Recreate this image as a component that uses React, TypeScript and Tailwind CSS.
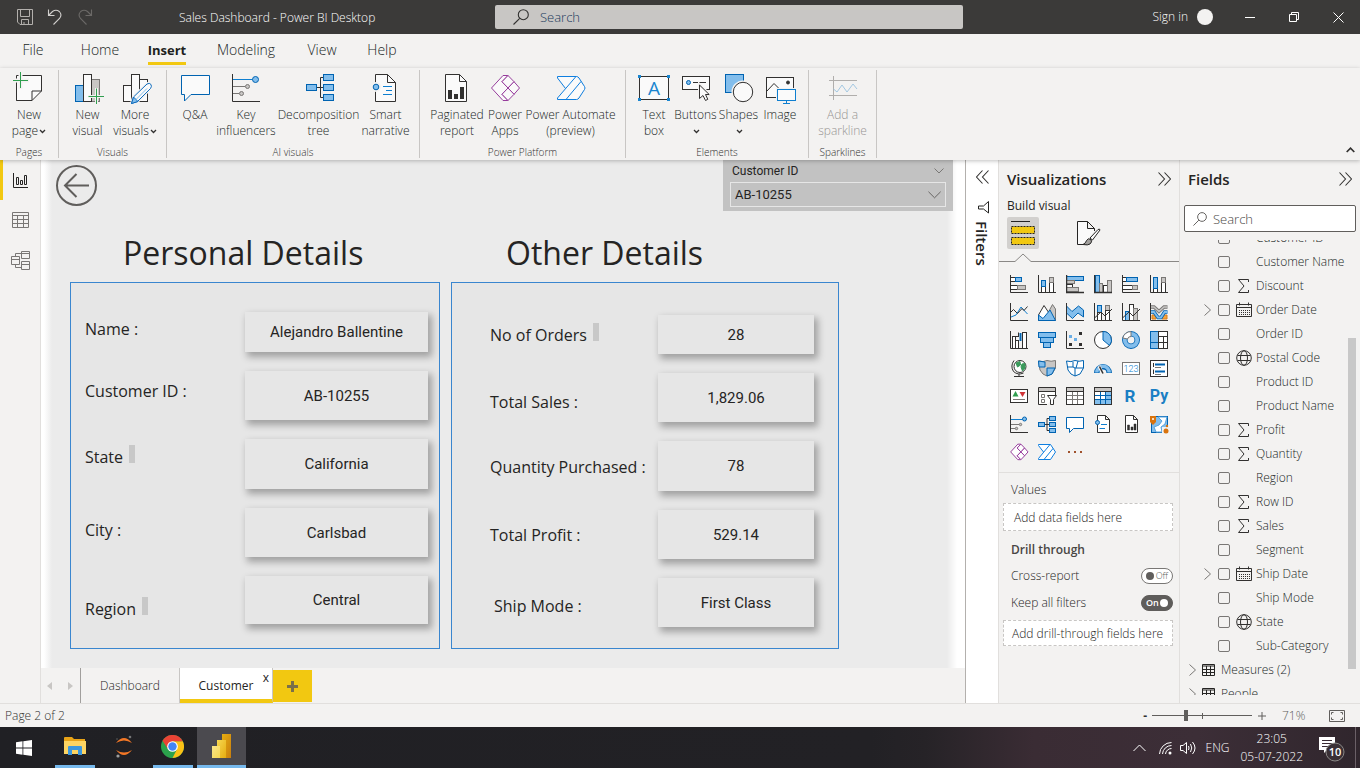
import type { ReactNode } from "react";

const INK = "#323130";
const BLUE = "#0063b1";
const SKY = "#83beec";
const GREY = "#c8c6c4";
const MID = "#797775";
const PAPER = "#fafafa";

/* ---------- ribbon ---------- */

function Big({ children }: { children: ReactNode }) {
  return (
    <svg width="34" height="34" viewBox="0 0 34 34" fill="none" stroke={INK} className="mb-px shrink-0" aria-hidden="true">
      {children}
    </svg>
  );
}

const diamonds = (
  <>
    <path d="M15 3.5L3.5 16L15 28.5H20L14 22.3L20 16L14 9.7L20 3.5Z" />
    <path d="M20 3.5L26 9.7L20 16L14 9.7Z" />
    <path d="M26 9.7L31.5 16L26 22.3L20 16Z" />
    <path d="M20 16L26 22.3L20 28.5L14 22.3Z" />
  </>
);

const icons: Record<string, ReactNode> = {
  newPage: (
    <Big>
      <path d="M4.5 3.5H29.5V19L20 28.5H4.5Z" fill={PAPER} />
      <path d="M20 28.5V19H29.5" />
      <path d="M0 8.5H17M8.5 0V17" stroke="#f3f2f1" strokeWidth="4" />
      <path d="M4.5 12V28.5" />
      <path d="M1 8.5H16M8.5 0V16" stroke="#2f9e4f" />
    </Big>
  ),
  newVisual: (
    <Big>
      <rect x="4.5" y="13.5" width="8" height="16" fill={SKY} stroke={BLUE} />
      <rect x="20.5" y="7.5" width="8" height="22" fill={GREY} stroke={MID} />
      <rect x="12.5" y="2.5" width="8" height="27" fill={PAPER} />
      <path d="M17 24.5H33M25.5 16V32" stroke="#f3f2f1" strokeWidth="3" />
      <path d="M17.5 24.5H33M25.5 16.5V32" stroke="#2f9e4f" />
    </Big>
  ),
  moreVisuals: (
    <Big>
      <rect x="5.5" y="13.5" width="8" height="16" fill={PAPER} />
      <rect x="21.5" y="7.5" width="8" height="22" fill={PAPER} />
      <rect x="13.5" y="2.5" width="8" height="27" fill={PAPER} />
      <path d="M13.5 31.5L15.5 25L29 12Q31.5 10.5 33 12.5Q34.5 14.5 32.5 16.5L19.5 29.5Z" fill={PAPER} stroke="#f3f2f1" strokeWidth="3" />
      <path d="M13.5 31.5L15.5 25L29 12Q31.5 10.5 33 12.5Q34 14.5 32.5 16.5L19.5 29.5Z" fill={PAPER} stroke="#0f6cbd" />
      <path d="M13.5 31.5L15.5 25L20 29.5Z" fill={SKY} stroke="#0f6cbd" />
      <path d="M18 27.5L29 16.5" stroke={SKY} />
    </Big>
  ),
  qa: (
    <Big>
      <path d="M3.5 3.5H31.5V22.5H13L6.5 29V22.5H3.5Z" fill={PAPER} stroke={BLUE} />
    </Big>
  ),
  key: (
    <Big>
      <path d="M3.5 2V29.5H31" />
      <path d="M4 7.5H23.5" stroke="#0f7fd0" />
      <circle cx="26.5" cy="7.5" r="3" fill={SKY} stroke={BLUE} />
      <path d="M4 14.5H16M4 21.5H10" stroke={MID} />
      <circle cx="18.5" cy="14.5" r="2" fill={GREY} stroke={MID} />
      <circle cx="12.5" cy="21.5" r="2" fill={GREY} stroke={MID} />
    </Big>
  ),
  tree: (
    <Big>
      <path d="M14.5 15.5H21.5M21.5 5.5H18.5V25.5H21.5" />
      <g fill={SKY} stroke={BLUE}>
        <rect x="4.5" y="12.5" width="10" height="6" />
        <rect x="21.5" y="2.5" width="10" height="6" />
        <rect x="21.5" y="12.5" width="10" height="6" />
        <rect x="21.5" y="22.5" width="10" height="6" />
      </g>
    </Big>
  ),
  smart: (
    <Big>
      <path d="M6.5 2.5H18.5L26.5 10.5V29.5H6.5Z" fill={PAPER} />
      <path d="M18.5 2.5V10.5H26.5" />
      <circle cx="7" cy="15" r="5" fill="#f3f2f1" stroke="none" />
      <circle cx="7" cy="15" r="2.8" fill={SKY} stroke={BLUE} />
      <path d="M14 14.5H23M17 18.5H23M14 22.5H23" stroke="#0f7fd0" />
    </Big>
  ),
  paginated: (
    <Big>
      <path d="M5.5 2.5H19.5L26.5 9.5V29.5H5.5Z" fill={PAPER} />
      <path d="M19.5 2.5V9.5H26.5" />
      <path d="M8 18h4v9h-4zM14 22h4v5h-4zM20 15h4v12h-4z" fill={INK} stroke="none" />
    </Big>
  ),
  apps: (
    <Big>
      <g stroke="#963c9c" fill={PAPER} strokeLinejoin="round">{diamonds}</g>
    </Big>
  ),
  automate: (
    <Big>
      <path d="M3.5 4.5H22L31 16L22 27.5H3.5L12 16Z" fill={PAPER} stroke="none" />
      <path d="M11.5 16.5L3.5 6V4.5H22.5Q24 4.5 25 6L30.5 14.5Q31.5 16 30.5 17.5L25 26Q24 27.5 22.5 27.5H3.5V26L22 4.5M12 27.5L27 9.5" stroke="#0f7fe0" />
    </Big>
  ),
  textBox: (
    <Big>
      <rect x="2.5" y="4.5" width="29" height="23" fill={PAPER} />
      <path d="M1 3h3v3h-3zM30 3h3v3h-3zM1 26h3v3h-3zM30 26h3v3h-3z" fill="#1a86d0" stroke="none" />
      <text x="17" y="23" fontSize="19" fontWeight="400" textAnchor="middle" fill="#1a86d0" stroke="none" className="font-['Open_Sans',sans-serif]">A</text>
    </Big>
  ),
  buttons: (
    <Big>
      <rect x="3.5" y="4.5" width="27" height="13" fill={PAPER} />
      <circle cx="9.5" cy="10.5" r="2" fill={SKY} stroke={BLUE} />
      <path d="M14 10.5H27" />
      <path d="M20.5 12.5V27L24 24L26.5 28.5L29 27L26.5 22.5H30.5Z" fill={PAPER} stroke="#f3f2f1" strokeWidth="3" />
      <path d="M20.5 13V26.5L24 23.5L26.5 28.5L28.8 27.3L26.5 22.5H30.2Z" fill={PAPER} />
    </Big>
  ),
  shapes: (
    <Big>
      <rect x="3.5" y="2.5" width="18" height="18" fill={SKY} stroke={BLUE} />
      <circle cx="21" cy="20" r="11.5" fill="#f3f2f1" stroke="none" />
      <circle cx="21" cy="20" r="9.7" fill={PAPER} />
    </Big>
  ),
  image: (
    <Big>
      <rect x="3.5" y="5.5" width="27" height="20" fill={PAPER} />
      <path d="M4 19L11 11.5L16 16.5" />
      <circle cx="25" cy="10.5" r="1.5" fill={INK} />
      <rect x="13" y="16" width="21" height="17" fill="#f3f2f1" stroke="none" />
      <rect x="14.5" y="17.5" width="18" height="11" fill={PAPER} stroke="#0f7fd0" />
      <path d="M23.5 28.5V31.5M20 31.5H27" stroke="#0f7fd0" />
    </Big>
  ),
  spark: (
    <Big>
      <path d="M7.5 4V28M3 8.5H31M3 23.5H31" stroke="#b0aeac" />
      <path d="M7.5 17L11 20L16 13L21 20L27 12L31 17" stroke="#a3c8e2" />
    </Big>
  ),
};

function Caret() {
  return (
    <svg width="7" height="5" viewBox="0 0 7 5" fill="none" stroke={INK} strokeWidth="1.3" aria-hidden="true" className="ml-px inline-block">
      <path d="M1 1L3.5 3.5L6 1" />
    </svg>
  );
}

type Cmd = { icon: string; a: string; b?: string; caret?: boolean; w: string; off?: boolean };
const ribbon: { name: string; cls: string; items: Cmd[] }[] = [
  { name: "Pages", cls: "", items: [{ icon: "newPage", a: "New", b: "page", caret: true, w: "w-[58px]" }] },
  {
    name: "Visuals",
    cls: "px-[6px]",
    items: [
      { icon: "newVisual", a: "New", b: "visual", w: "w-[45px]" },
      { icon: "moreVisuals", a: "More", b: "visuals", caret: true, w: "w-[50px]" },
    ],
  },
  {
    name: "AI visuals",
    cls: "px-2",
    items: [
      { icon: "qa", a: "Q&A", w: "w-[40px]" },
      { icon: "key", a: "Key", b: "influencers", w: "w-[62px]" },
      { icon: "tree", a: "Decomposition", b: "tree", w: "w-[83px]" },
      { icon: "smart", a: "Smart", b: "narrative", w: "w-[51px]" },
    ],
  },
  {
    name: "Power Platform",
    cls: "px-2",
    items: [
      { icon: "paginated", a: "Paginated", b: "report", w: "w-[58px]" },
      { icon: "apps", a: "Power", b: "Apps", w: "w-[38px]" },
      { icon: "automate", a: "Power Automate", b: "(preview)", w: "w-[93px]" },
    ],
  },
  {
    name: "Elements",
    cls: "px-2",
    items: [
      { icon: "textBox", a: "Text", b: "box", w: "w-[40px]" },
      { icon: "buttons", a: "Buttons", caret: true, w: "w-[43px]" },
      { icon: "shapes", a: "Shapes", caret: true, w: "w-[43px]" },
      { icon: "image", a: "Image", w: "w-[40px]" },
    ],
  },
  { name: "Sparklines", cls: "", items: [{ icon: "spark", a: "Add a", b: "sparkline", w: "w-[67px]", off: true }] },
];

function Ribbon() {
  return (
    <div className="relative z-10 flex items-stretch bg-[#f3f2f1] pb-[2px] pt-[2px] shadow-[0_1px_4px_rgba(0,0,0,0.25)]">
      {ribbon.map((g) => (
        <section key={g.name} aria-label={g.name} className="flex h-[88px] flex-col items-center border-r border-[#c8c6c4]">
          <div className={"flex h-[78px] items-start pt-[2px] " + g.cls}>
            {g.items.map((c) => (
              <button
                key={c.icon}
                type="button"
                disabled={c.off}
                className={"flex flex-col items-center whitespace-nowrap text-[12px] font-[330] leading-4 " + c.w + (c.off ? " text-[#979593]" : " text-[#201f1e]")}
              >
                {icons[c.icon]}
                <span>{c.a}</span>
                <span>
                  {c.b}
                  {c.caret && <Caret />}
                </span>
              </button>
            ))}
          </div>
          <span className="text-[10px] leading-3 text-[#323130]">{g.name}</span>
        </section>
      ))}
      <button type="button" aria-label="Collapse ribbon" className="ml-auto self-end p-[5px]">
        <svg width="9" height="6" viewBox="0 0 9 6" fill="none" stroke={INK} strokeWidth="1.7">
          <path d="M.7 5L4.5 1.2L8.3 5" />
        </svg>
      </button>
    </div>
  );
}

/* ---------- title bar ---------- */

function Magnifier({ size, color }: { size: number; color: string }) {
  return (
    <svg width={size} height={size} viewBox="0 0 16 16" fill="none" stroke={color} strokeWidth="1.1" aria-hidden="true" className="shrink-0">
      <circle cx="10.3" cy="5.7" r="5" />
      <path d="M6.7 9.3L.5 15.5" />
    </svg>
  );
}

function TitleBar() {
  return (
    <header className="grid h-[34px] shrink-0 grid-cols-[495fr_468fr_397fr] items-center bg-[#3b3a39] text-[12px] text-white">
      <div className="flex items-center pl-[17px]">
        <div className="flex w-[162px] items-center gap-[14px]">
          <button type="button" aria-label="Save">
            <svg width="16" height="16" viewBox="0 0 16 16" fill="none" stroke="#b3b0ad">
              <path d="M.5 .5H15.5V15.5H3L.5 13ZM3.5 .5V7.5H12.5V.5M4.5 15.5V10.5H11.5V15.5M7 13V15.5" />
            </svg>
          </button>
          <button type="button" aria-label="Undo">
            <svg width="16" height="16" viewBox="0 0 16 16" fill="none" stroke="#d2d0ce" strokeWidth="1.1">
              <path d="M1.5 .5V6.5H7.5M1.5 6.5L5.5 2.5Q9 0 12.3 2.5Q15.5 6 12.5 9.5L6.5 15.5" />
            </svg>
          </button>
          <button type="button" aria-label="Redo">
            <svg width="16" height="16" viewBox="0 0 16 16" fill="none" stroke="#6b6967" strokeWidth="1.1">
              <path d="M14.5 .5V6.5H8.5M14.5 6.5L10.5 2.5Q7 0 3.7 2.5Q.5 6 3.5 9.5L9.5 15.5" />
            </svg>
          </button>
        </div>
        <h1 className="whitespace-nowrap pt-[2px] font-[350]">Sales Dashboard - Power BI Desktop</h1>
      </div>
      <label className="flex h-6 items-center gap-[11px] rounded-[2px] bg-[#c8c6c4] pl-[18px]">
        <Magnifier size={16} color="#323130" />
        <span className="sr-only">Search Power BI</span>
        <input type="text" placeholder="Search" className="h-6 w-full bg-transparent text-[13px] leading-6 text-[#1b3a5c] outline-none placeholder:text-[#1b3a5c]" />
      </label>
      <div className="flex items-center justify-end">
        <button type="button" className="mr-[15px] flex items-center gap-[9px]">
          Sign in
          <span className="size-4 rounded-full bg-[#f3f2f1]" />
        </button>
        <button type="button" aria-label="Minimize" className="flex h-8 w-11 items-center justify-center">
          <svg width="10" height="10" viewBox="0 0 10 10" stroke="#fff"><path d="M0 5.5H10" /></svg>
        </button>
        <button type="button" aria-label="Restore" className="flex h-8 w-11 items-center justify-center">
          <svg width="10" height="10" viewBox="0 0 10 10" fill="none" stroke="#fff"><path d="M.5 2.5H7.5V9.5H.5ZM2.5 2V.5H9.5V7.5H8" /></svg>
        </button>
        <button type="button" aria-label="Close" className="flex h-8 w-11 items-center justify-center">
          <svg width="11" height="11" viewBox="0 0 11 11" stroke="#fff"><path d="M.5 .5L10.5 10.5M10.5 .5L.5 10.5" /></svg>
        </button>
      </div>
    </header>
  );
}

const menus = [
  { t: "File", w: "w-[66px]" },
  { t: "Home", w: "w-[68px]" },
  { t: "Insert", w: "w-[66px]" },
  { t: "Modeling", w: "w-[92px]" },
  { t: "View", w: "w-[60px]" },
  { t: "Help", w: "w-[60px]" },
];

function Menu() {
  return (
    <nav className="flex h-[34px] shrink-0 bg-[#f3f2f1] text-[14px] font-[330] text-[#201f1e]">
      {menus.map((m) => (
        <button key={m.t} type="button" className={"flex justify-center " + m.w}>
          {m.t === "Insert" ? (
            <span className="h-[31px] border-b-3 border-[#f2c811] pt-[6px] text-[13px] font-bold leading-5">{m.t}</span>
          ) : (
            <span className="pt-[6px] leading-5">{m.t}</span>
          )}
        </button>
      ))}
    </nav>
  );
}

/* ---------- left rail ---------- */

function Rail() {
  return (
    <nav aria-label="Views" className="flex w-[41px] shrink-0 flex-col border-r border-[#e1dfdd] bg-[#f3f2f1]">
      <button type="button" aria-label="Report view" className="flex h-10 items-center justify-center border-l-3 border-[#f2c811] pr-[2px]">
        <svg width="15" height="15" viewBox="0 0 15 15" fill="none" stroke="#252423">
          <path d="M.5 0V14.5H15M3.5 4.5H5.5V11.5H3.5ZM7.5 7.5H9.5V11.5H7.5ZM11.5 2.5H13.5V11.5H11.5Z" />
        </svg>
      </button>
      <button type="button" aria-label="Data view" className="flex h-10 items-center justify-center">
        <svg width="17" height="16" viewBox="0 0 17 16" fill="none" stroke="#797775">
          <path d="M.5 .5H16.5V15.5H.5ZM.5 3.5H16.5M.5 7.5H16.5M.5 11.5H16.5M5.5 3.5V15.5M11.5 3.5V15.5" />
        </svg>
      </button>
      <button type="button" aria-label="Model view" className="flex h-10 items-center justify-center">
        <svg width="19" height="19" viewBox="0 0 19 19" fill="none" stroke="#797775">
          <path d="M.5 5.5H8.5V13.5H.5ZM.5 8.5H8.5M10.5 .5H18.5V7.5H10.5ZM10.5 2.5H18.5M10.5 10.5H18.5V18.5H10.5ZM10.5 13.5H18.5M4.5 5.5V2.5H10.5M4.5 13.5V16.5H10.5" />
        </svg>
      </button>
    </nav>
  );
}

/* ---------- report page ---------- */

type LabelRow = { t: string; h: string; mark?: boolean; pad?: string };
type CardRow = { v: string; h: string };

function Panel({ title, titlePad, labels, cards, labelTop, cardTop, left, cardCol }: {
  title: string;
  titlePad: string;
  labels: LabelRow[];
  cards: CardRow[];
  labelTop: string;
  cardTop: string;
  left: string;
  cardCol: string;
}) {
  return (
    <section>
      <h2 className={"whitespace-nowrap pb-[3px] pt-[15px] text-[32px] font-[370] leading-[53px] text-[#252423] " + titlePad}>{title}</h2>
      <div className={"flex h-[367px] justify-between border border-[#3a86cf] bg-[#e6e6e6] " + left}>
        <div className={labelTop}>
          {labels.map((l) => (
            <div key={l.t} className={"flex items-start gap-[6px] whitespace-nowrap text-[16px] font-[380] leading-6 text-[#252423] " + l.h + " " + (l.pad ?? "")}>
              {l.t}
              {l.mark && <span className="h-[18px] w-[6px] bg-[#c8c8c8]" />}
            </div>
          ))}
        </div>
        <div className={"flex flex-col " + cardTop + " " + cardCol}>
          {cards.map((c) => (
            <div key={c.v} className={"flex items-center justify-center bg-[#e6e6e6] pt-px font-['Roboto',sans-serif] text-[15px] font-[450] text-[#252423] shadow-[3px_4px_7px_1px_rgba(0,0,0,0.3)] " + c.h}>
              {c.v}
            </div>
          ))}
        </div>
      </div>
    </section>
  );
}

function Report() {
  return (
    <main className="min-h-0 flex-1 overflow-hidden bg-[linear-gradient(to_right,#fff_3px,#ebebeb_11px,#ebebeb_calc(100%-18px),#fff_calc(100%-8px))]">
      <div className="flex items-start justify-between pl-[15px] pr-[12px]">
        <button type="button" aria-label="Back" className="pt-[5px]">
          <svg width="41" height="41" viewBox="0 0 41 41" fill="none" stroke="#605e5c" strokeWidth="2">
            <circle cx="20.5" cy="20.5" r="19.5" />
            <path d="M33 20.5H9M20.5 9L9 20.5L20.5 32" />
          </svg>
        </button>
        <div className="w-[230px] bg-[#c2c2c2] px-[7px] pb-[4px] pt-[3px] font-['Roboto',sans-serif] text-[#252423]">
          <div className="flex items-center justify-between pl-[2px] pr-[2px]">
            <label htmlFor="customer" className="text-[12px] font-[450] leading-4">Customer ID</label>
            <svg width="10" height="6" viewBox="0 0 10 6" fill="none" stroke="#797775"><path d="M.5 .5L5 5L9.5 .5" /></svg>
          </div>
          <div className="mt-[3px] flex h-[25px] items-center border border-[#e6e6e6] pr-[4px]">
            <select id="customer" className="w-full appearance-none bg-transparent pl-[4px] pt-px text-[13px] font-normal outline-none">
              <option>AB-10255</option>
            </select>
            <svg width="14" height="8" viewBox="0 0 14 8" fill="none" stroke="#605e5c"><path d="M.5 .5L7 7L13.5 .5" /></svg>
          </div>
        </div>
      </div>
      <div className="ml-[29px] mr-[126px] grid grid-cols-[370fr_388fr] gap-[11px]">
        <Panel
          title="Personal Details"
          titlePad="pl-[53px]"
          left="pl-[14px] pr-[11px]"
          labelTop="pt-[34px]"
          cardTop="pt-[29px]"
          cardCol="w-[183px] gap-[19px]"
          labels={[
            { t: "Name :", h: "h-[62px]" },
            { t: "Customer ID :", h: "h-[66px]" },
            { t: "State", h: "h-[73px]", mark: true },
            { t: "City :", h: "h-[79px]" },
            { t: "Region", h: "h-[24px]", mark: true },
          ]}
          cards={[
            { v: "Alejandro Ballentine", h: "h-[40px]" },
            { v: "AB-10255", h: "h-[49px]" },
            { v: "California", h: "h-[50px]" },
            { v: "Carlsbad", h: "h-[49px]" },
            { v: "Central", h: "h-[48px]" },
          ]}
        />
        <Panel
          title="Other Details"
          titlePad="pl-[55px]"
          left="pl-[38px] pr-[24px]"
          labelTop="pt-[40px]"
          cardTop="pt-[32px]"
          cardCol="w-[156px] gap-[19px]"
          labels={[
            { t: "No of Orders", h: "h-[67px]", mark: true },
            { t: "Total Sales :", h: "h-[65px]" },
            { t: "Quantity Purchased :", h: "h-[68px]" },
            { t: "Total Profit :", h: "h-[71px]" },
            { t: "Ship Mode :", h: "h-[24px]", pad: "pl-1" },
          ]}
          cards={[
            { v: "28", h: "h-[39px]" },
            { v: "1,829.06", h: "h-[49px]" },
            { v: "78", h: "h-[50px]" },
            { v: "529.14", h: "h-[49px]" },
            { v: "First Class", h: "h-[49px]" },
          ]}
        />
      </div>
    </main>
  );
}

function PageTabs() {
  return (
    <div className="flex h-[35px] shrink-0 items-start bg-[#f3f2f1] text-[12px] text-[#252423]">
      <div className="flex h-full w-10 items-center justify-between border-r border-[#a19f9d] pl-[6px] pr-[7px]">
        <button type="button" aria-label="Previous page"><svg width="5" height="8" viewBox="0 0 5 8" fill="#c8c6c4"><path d="M5 0V8L0 4Z" /></svg></button>
        <button type="button" aria-label="Next page"><svg width="5" height="8" viewBox="0 0 5 8" fill="#c8c6c4"><path d="M0 0V8L5 4Z" /></svg></button>
      </div>
      <button type="button" className="h-full w-[99px] border-r border-[#c8c6c4]">Dashboard</button>
      <div className="relative h-full w-[93px] border-b-4 border-r border-b-[#f2c811] border-r-[#c8c6c4] bg-white">
        <button type="button" className="h-full w-full pt-[4px] font-medium">Customer</button>
        <button type="button" aria-label="Delete page" className="absolute right-[3px] top-[2px] font-normal leading-4">x</button>
      </div>
      <button type="button" aria-label="New page" className="mt-[2px] flex h-8 w-[39px] items-center justify-center bg-[#f2c811]">
        <svg width="11" height="11" viewBox="0 0 11 11" stroke="#7a6f4a" strokeWidth="3"><path d="M5.5 0V11M0 5.5H11" /></svg>
      </button>
    </div>
  );
}

/* ---------- side panes ---------- */

function Chevrons({ flip }: { flip?: boolean }) {
  return (
    <svg width="13" height="14" viewBox="0 0 13 14" fill="none" stroke="#323130" strokeWidth="1.1" className={flip ? "rotate-180" : ""}>
      <path d="M.5 .5L6.5 7L.5 13.5M6.5 .5L12.5 7L6.5 13.5" />
    </svg>
  );
}

function Filters() {
  return (
    <aside className="flex w-[33px] shrink-0 flex-col items-center border-l border-[#b3b0ad] bg-white pt-[10px]">
      <button type="button" aria-label="Expand filters"><Chevrons flip /></button>
      <svg width="13" height="13" viewBox="0 0 13 13" fill="none" stroke="#252423" className="ml-[3px] mt-[17px]" aria-hidden="true">
        <path d="M11.5 .5V12L6.5 8H1.5V5H6.5Z" />
      </svg>
      <h2 className="mt-[7px] text-[15px] font-semibold leading-5 text-[#252423] [writing-mode:vertical-rl]">Filters</h2>
    </aside>
  );
}

const bS = { fill: SKY, stroke: BLUE };
const gS = { fill: GREY, stroke: MID };
const wS = { fill: "#fff", stroke: INK };
const axis = <path d="M.5 0V17.5H18" />;
const pageFold = <path d="M3.5 .5H11.5L15.5 4.5V17.5H3.5ZM11.5 .5V4.5H15.5" fill="#fff" />;

const gallery: [string, ReactNode][] = [
  ["Stacked bar chart", <>{axis}<rect x=".5" y="2.5" width="5" height="4" {...wS} /><rect x="5.5" y="2.5" width="6" height="4" {...bS} /><rect x=".5" y="10.5" width="7" height="4" {...wS} /><rect x="7.5" y="10.5" width="8" height="4" {...gS} /></>],
  ["Stacked column chart", <>{axis}<rect x="3.5" y="11.5" width="4" height="6" {...wS} /><rect x="3.5" y="5.5" width="4" height="6" {...bS} /><rect x="11.5" y="7.5" width="4" height="10" {...wS} /><rect x="11.5" y="2.5" width="4" height="5" {...gS} /></>],
  ["Clustered bar chart", <><rect x=".5" y="1.5" width="17" height="4" {...bS} /><rect x=".5" y="5.5" width="8" height="3" {...gS} /><rect x=".5" y="9.5" width="6" height="3" {...wS} /><rect x=".5" y="12.5" width="12" height="4" {...gS} /><path d="M.5 0V17.5H18" strokeWidth="1.5" /></>],
  ["Clustered column chart", <><rect x="1.5" y=".5" width="4" height="17" {...bS} /><rect x="5.5" y="8.5" width="3" height="9" {...gS} /><rect x="9.5" y="10.5" width="4" height="7" {...wS} /><rect x="13.5" y="5.5" width="4" height="12" {...gS} /><path d="M.5 0V17.5H18" strokeWidth="1.5" /></>],
  ["100% stacked bar chart", <>{axis}<rect x=".5" y="2.5" width="4" height="4" {...wS} /><rect x="4.5" y="2.5" width="11" height="4" {...bS} /><rect x=".5" y="10.5" width="10" height="4" {...wS} /><rect x="10.5" y="10.5" width="5" height="4" {...gS} /></>],
  ["100% stacked column chart", <>{axis}<rect x="3.5" y="13.5" width="4" height="4" {...wS} /><rect x="3.5" y="2.5" width="4" height="11" {...bS} /><rect x="11.5" y="7.5" width="4" height="10" {...wS} /><rect x="11.5" y="2.5" width="4" height="5" {...gS} /></>],
  ["Line chart", <>{axis}<path d="M1 14L6 12L11 4L17.5 11" stroke="#0f7fd0" /><path d="M1 9L3.5 6.5L7.5 10.5L12 5.5L14 7.5L17.5 3.5" /></>],
  ["Area chart", <><path d="M11 8L14.5 1.5L17.5 6V17.5H9Z" {...gS} /><path d="M.5 12L6 2.5L13 13L9 17.5H.5Z" {...wS} /><path d="M.5 12L5 15.5L12 7L17.5 17.5H.5Z" {...bS} /></>],
  ["Stacked area chart", <><path d="M.5 3L6 8.5L12.5 3L17.5 7V14L12 10L6.5 15.5L.5 10Z" {...bS} />{axis}</>],
  ["Line and stacked column chart", <><rect x="3.5" y="2.5" width="4" height="7" {...bS} /><rect x="3.5" y="9.5" width="4" height="8" {...wS} /><rect x="11.5" y="2.5" width="4" height="5" {...gS} /><rect x="11.5" y="7.5" width="4" height="10" {...wS} />{axis}<path d="M.5 15L7 9L11 13L18 6" /></>],
  ["Line and clustered column chart", <><rect x="3.5" y="8.5" width="4" height="9" {...bS} /><rect x="7.5" y="1.5" width="4" height="16" {...wS} /><rect x="11.5" y="5.5" width="4" height="12" {...gS} />{axis}<path d="M.5 15L7 9L11 13L18 6" /></>],
  ["Ribbon chart", <><path d="M2 12h4v4h-4zM12 12h5v4h-5z" fill="#f2a33c" stroke="#d97a1a" /><path d="M1 4H4L9 8.5L14 4H17.5" stroke={MID} strokeWidth="3.5" /><path d="M1 4H4L9 8.5L14 4H17.5" stroke={GREY} strokeWidth="1.5" /><path d="M1 9H4L8 14.5H11L14.5 9H17.5" stroke={BLUE} strokeWidth="3.5" /><path d="M1 9H4L8 14.5H11L14.5 9H17.5" stroke={SKY} strokeWidth="1.8" />{axis}</>],
  ["Waterfall chart", <>{axis}<rect x="2.5" y="5.5" width="3" height="12" {...wS} /><rect x="5.5" y="9.5" width="3" height="8" {...wS} /><path d="M10.5 2V10" stroke={BLUE} strokeWidth="2" /><path d="M5.5 5.5H9M8.5 1.5V5" /><rect x="12.5" y="1.5" width="4" height="16" {...wS} /></>],
  ["Funnel", <><rect x=".5" y="1.5" width="17" height="5" {...bS} /><rect x="2.5" y="6.5" width="13" height="5" {...bS} /><rect x="5.5" y="11.5" width="7" height="5" {...bS} /></>],
  ["Scatter chart", <>{axis}<path d="M3 12h3v3h-3zM13 1h3v3h-3zM13 12h3v3h-3z" fill={INK} stroke="none" /><path d="M3 4h3v3h-3zM8 7h3v3h-3z" fill="#6aaee6" stroke="none" /></>],
  ["Pie chart", <><circle cx="9" cy="9" r="8.5" {...wS} /><path d="M9 .5A8.5 8.5 0 0 1 15.5 14.5L9 9Z" {...bS} /></>],
  ["Donut chart", <><circle cx="9" cy="9" r="6.2" stroke={BLUE} strokeWidth="5.5" /><circle cx="9" cy="9" r="6.2" stroke={SKY} strokeWidth="3.8" /><path d="M.8 7A8.3 8.3 0 0 1 9 .6V5.5A3.5 3.5 0 0 0 5.5 8Z" fill="#fff" stroke={MID} /></>],
  ["Treemap", <><rect x=".5" y=".5" width="17" height="17" {...wS} /><rect x=".5" y=".5" width="8" height="17" {...bS} /><path d="M.5 11.5H8.5" stroke={BLUE} /><path d="M8.5 5.5H17.5M13.5 5.5V17.5M8.5 11.5H17.5M8.5 0V18" /></>],
  ["Map", <><circle cx="10" cy="7.5" r="6" fill="#fff" stroke={INK} /><path d="M6 4L10 2.5L10.5 6L7.5 8ZM12 5L15 4.5L15 9L12.5 12L11 8Z" fill="#3a9a5b" stroke="#3a9a5b" /><path d="M4 1.5Q0 7 3.5 12.5Q8 16.5 13.5 14M9 15V17.5M4 17.5H14" /></>],
  ["Filled map", <><path d="M.5 2Q5 3.5 9 1.5Q13 3 17.5 1.5V9L14 15L9 17L5 15L2 11Z" {...gS} /><path d="M.5 2L7 3V8H1ZM9 9H17L14 15L9 17Z" {...bS} /></>],
  ["Azure map", <><path d="M.5 2Q5 3.5 9 1.5Q13 3 17.5 1.5V9L14 15L9 17L5 15L2 11Z" fill="#fff" stroke={BLUE} /><path d="M7 3V8H1M9 17V9H17M7 8L9 9M12 2L10 9" stroke={BLUE} /></>],
  ["Gauge", <><path d="M2.8 14A6.2 6.2 0 0 1 15.2 14" stroke={BLUE} strokeWidth="5.5" /><path d="M2.8 13.5A6.2 6.2 0 0 1 15.2 13.5" stroke={SKY} strokeWidth="3.5" /><path d="M8 13.5L5 7" stroke="#f3f2f1" strokeWidth="3" /><path d="M9 14.5L5.5 7.5" strokeWidth="1.5" /></>],
  ["Card", <><rect x=".5" y="3.5" width="17" height="12" fill="#fff" stroke={MID} /><text x="9" y="13" fontSize="9" textAnchor="middle" fill="#0f7fd0" stroke="none" className="font-['Roboto',sans-serif]">123</text></>],
  ["Multi-row card", <><rect x=".5" y="1.5" width="17" height="16" {...wS} /><path d="M3.5 4V8M3.5 10.5V15" /><path d="M5 5.5H15M5 12.5H15" stroke={BLUE} strokeWidth="2" /><path d="M5 8.5H11M5 15.5H11" stroke={MID} /></>],
  ["KPI", <><rect x=".5" y="2.5" width="17" height="13" {...wS} /><path d="M2.5 9.5L5.5 4L8.5 9.5Z" fill="#2f9e4f" stroke="none" /><path d="M9.5 5H15.5L12.5 10Z" fill="#d13438" stroke="none" /><path d="M3 12.5H15" stroke={MID} /></>],
  ["Slicer", <><path d="M9 17.5H.5V.5H17.5V9" fill="#fff" /><path d="M1 1H17V4H1Z" fill={GREY} stroke="none" /><path d="M.5 4.5H17.5" /><path d="M3.5 7.5H6.5V10.5H3.5ZM3.5 12.5H6.5V15.5H3.5Z" stroke={MID} /><path d="M9.5 8.5H18.5L15.5 12.5V17.5H12.5V12.5Z" fill="#fff" /></>],
  ["Table", <><rect x=".5" y=".5" width="17" height="17" {...wS} /><path d="M1 1H17V4H1Z" fill={GREY} stroke="none" /><path d="M.5 4.5H17.5" /><path d="M1 8.5H17M1 12.5H17M6.5 5V17M11.5 5V17" stroke={MID} /></>],
  ["Matrix", <><rect x=".5" y=".5" width="17" height="17" {...wS} /><path d="M1 1H17V4H1Z" fill={GREY} stroke="none" /><path d="M12 5H17V17H1V13H12Z" fill={SKY} stroke="none" /><path d="M.5 4.5H17.5" /><path d="M1 8.5H17M1 12.5H17M6.5 5V17M11.5 5V17" stroke={BLUE} /></>],
  ["R script visual", <text x="8" y="15" fontSize="17" fontWeight="700" textAnchor="middle" fill="#1a7fc4" stroke="none" className="font-['Roboto',sans-serif]">R</text>],
  ["Python visual", <text x="9" y="14" fontSize="16" fontWeight="700" textAnchor="middle" fill="#1a7fc4" stroke="none" className="font-['Roboto',sans-serif]">Py</text>],
  ["Key influencers", <>{axis}<path d="M1 4.5H12" stroke="#0f7fd0" /><circle cx="14.5" cy="4" r="2" {...bS} /><path d="M1 9.5H9M1 13.5H5" stroke={MID} /><circle cx="10.5" cy="9.5" r="1.2" {...gS} /><circle cx="6.5" cy="13.5" r="1.2" {...gS} /></>],
  ["Decomposition tree", <><path d="M6.5 9.5H11.5M11.5 3.5H9V15.5H11.5" /><rect x=".5" y="7.5" width="6" height="4" {...bS} /><rect x="11.5" y="1.5" width="6" height="4" {...bS} /><rect x="11.5" y="7.5" width="6" height="4" {...bS} /><rect x="11.5" y="13.5" width="6" height="4" {...bS} /></>],
  ["Q&A", <path d="M.5 2.5H17.5V13.5H7.5L3.5 17.5V13.5H.5Z" fill="#fff" stroke={BLUE} />],
  ["Smart narrative", <>{pageFold}<circle cx="3.5" cy="7.5" r="2" {...bS} /><path d="M7 9.5H13M5.5 13.5H11" stroke="#0f7fd0" /></>],
  ["Paginated report", <>{pageFold}<path d="M5.5 10h2v5h-2zM9 12h2v3h-2zM12 9h2v6h-2z" fill={INK} stroke={INK} strokeWidth=".5" /></>],
  ["ArcGIS maps", <><rect x="1.5" y="1.5" width="16" height="16" fill={SKY} stroke={BLUE} /><path d="M8 2L12 6L9 10L4 12L6 17H12L11 12L15 9L17 2Z" fill="#fff" stroke="#5aa5de" /><path d="M0 1H6V7L3 10L0 7Z" fill="#d9730d" stroke="none" /><circle cx="3" cy="4" r="1" fill="#fff" stroke="none" /><rect x="12" y="12" width="6" height="6" fill="#f3f2f1" stroke="none" /><circle cx="16" cy="16" r="2.5" fill="#d9730d" stroke="none" /><circle cx="17" cy="11" r="1.2" fill="#d9730d" stroke="none" /></>],
  ["Power Apps", <g stroke="#963c9c" fill="#fff" strokeWidth="1.6" strokeLinejoin="round" transform="translate(-1.5 -1) scale(0.62)">{diamonds}</g>],
  ["Power Automate", <path d="M5.5 9L.5 2.5V1.5H12.5L17.5 9L12.5 16.5H.5V15.5L12 1.5M6 16.5L15 5.5" fill="#fff" stroke="#0f7fe0" />],
];

const dashed = "border border-dashed border-[#c8c6c4] bg-white text-left text-[12px] text-[#252423]";

function Toggle({ id, label, on }: { id: string; label: string; on: boolean }) {
  return (
    <div className="flex h-[27px] items-center justify-between pl-2 text-[12px] text-[#252423]">
      <label htmlFor={id}>{label}</label>
      <span className={"relative flex h-4 w-8 items-center justify-between rounded-full border px-[4px] text-[9px] " + (on ? "border-[#5f5d5b] bg-[#5f5d5b] text-white" : "border-[#797775] bg-white text-[#605e5c]")}>
        <input id={id} type="checkbox" role="switch" defaultChecked={on} className="absolute inset-0 m-0 size-full opacity-0" />
        {on ? <span className="font-semibold">On</span> : <span className="size-2 rounded-full bg-[#605e5c]" />}
        {on ? <span className="size-2 rounded-full bg-white" /> : <span>Off</span>}
      </span>
    </div>
  );
}

function PaneTitle({ title }: { title: string }) {
  return (
    <div className="flex h-[38px] shrink-0 items-center justify-between px-2">
      <h2 className="text-[15px] font-semibold leading-5 text-[#252423]">{title}</h2>
      <button type="button" aria-label={"Collapse " + title}><Chevrons /></button>
    </div>
  );
}

function Visualizations() {
  return (
    <aside className="flex w-[181px] shrink-0 flex-col border-l border-[#e1dfdd] bg-[#f3f2f1]">
      <PaneTitle title="Visualizations" />
      <h3 className="pl-[8px] text-[12px] font-medium leading-4 text-[#252423]">Build visual</h3>
      <div className="flex items-center gap-9 pb-[4px] pl-[8px] pt-[3px]">
        <button type="button" aria-label="Build visual" className="flex size-8 items-center justify-center rounded-[2px] bg-[#d2d0ce]">
          <svg width="26" height="26" viewBox="0 0 26 26" fill="#f2c811" stroke="#252423">
            <path d="M1 1.5H20" />
            <rect x="1.5" y="6.5" width="23" height="7" strokeDasharray="2 1" />
            <rect x="1.5" y="17.5" width="23" height="7" strokeDasharray="2 1" />
          </svg>
        </button>
        <button type="button" aria-label="Format visual">
          <svg width="26" height="26" viewBox="0 0 26 26" fill="none" stroke="#252423">
            <path d="M8 24.5H2.5V1.5H12.5L19.5 8.5V11M12.5 1.5V8.5H19.5" fill="#fafafa" />
            <path d="M25 10L17.5 20L15 18L23 9.5Q25 8.5 25 10Z" fill="#fafafa" />
            <path d="M8 24.5Q11 23 11.5 20.5Q13 17.5 16 19.5Q17.5 22 15 24Q13 25.5 8 24.5Z" fill="#a19f9d" />
          </svg>
        </button>
      </div>
      <div className="flex h-[9px] items-end">
        <span className="w-4 border-b border-[#8a8886]" />
        <svg width="16" height="9" viewBox="0 0 16 9" fill="none" stroke="#8a8886"><path d="M0 8.5L8 1L16 8.5" /></svg>
        <span className="flex-1 border-b border-[#8a8886]" />
      </div>
      <div className="grid grid-cols-[repeat(6,28px)] gap-0 border-b border-[#e1dfdd] pb-[6px] pl-[6px] pt-[8px]">
        {gallery.map(([name, art]) => (
          <button key={name} type="button" aria-label={name} className="flex size-7 items-center justify-center">
            <svg width="19" height="19" viewBox="0 0 19 19" fill="none" stroke={INK}>{art}</svg>
          </button>
        ))}
        <button type="button" aria-label="More visuals" className="flex size-7 items-center justify-center">
          <svg width="16" height="4" viewBox="0 0 16 4" fill="#a0522d"><path d="M1 1h2v2h-2zM7 1h2v2h-2zM13 1h2v2h-2z" /></svg>
        </button>
      </div>
      <div className="flex flex-col pl-[4px] pr-[6px] pt-[8px]">
        <h3 className="pl-2 text-[12px] font-[350] leading-[18px] text-[#252423]">Values</h3>
        <button type="button" className={"mt-[4px] h-[28px] pl-[10px] pt-px " + dashed}>Add data fields here</button>
        <h3 className="mb-[3px] mt-[10px] pl-2 text-[12px] font-semibold leading-[18px] text-[#484644]">Drill through</h3>
        <Toggle id="cross" label="Cross-report" on={false} />
        <Toggle id="keep" label="Keep all filters" on />
        <button type="button" className={"mt-[4px] h-[26px] whitespace-nowrap pl-[8px] pt-px " + dashed}>Add drill-through fields here</button>
      </div>
    </aside>
  );
}

const fieldIcons = {
  sum: <path d="M12.5 4V1.5H2.5L8 8L2.5 14.5H12.5V12" />,
  date: <><path d="M.5 2.5H15.5V14.5H.5ZM.5 5.5H15.5M3.5 .5V3.5M12.5 .5V3.5" /><path d="M3 8.5H14M3 10.5H14M3 12.5H14" strokeDasharray="1 1" /></>,
  globe: <><circle cx="8" cy="8" r="7.3" /><ellipse cx="8" cy="8" rx="3.5" ry="7.3" /><path d="M1.5 5.5H14.5M1.5 10.5H14.5" /></>,
};

type Field = { t: string; icon?: keyof typeof fieldIcons; open?: boolean };
const fields: Field[] = [
  { t: "Customer ID" },
  { t: "Customer Name" },
  { t: "Discount", icon: "sum" },
  { t: "Order Date", icon: "date", open: true },
  { t: "Order ID" },
  { t: "Postal Code", icon: "globe" },
  { t: "Product ID" },
  { t: "Product Name" },
  { t: "Profit", icon: "sum" },
  { t: "Quantity", icon: "sum" },
  { t: "Region" },
  { t: "Row ID", icon: "sum" },
  { t: "Sales", icon: "sum" },
  { t: "Segment" },
  { t: "Ship Date", icon: "date", open: true },
  { t: "Ship Mode" },
  { t: "State", icon: "globe" },
  { t: "Sub-Category" },
];

function RowChevron() {
  return (
    <svg width="8" height="12" viewBox="0 0 8 12" fill="none" stroke="#797775"><path d="M1.5 .5L7.5 6L1.5 11.5" /></svg>
  );
}

function Fields() {
  return (
    <aside className="flex w-[181px] shrink-0 flex-col border-l border-[#e1dfdd] bg-[#f3f2f1] pb-2">
      <PaneTitle title="Fields" />
      <label className="mx-[4px] mt-[7px] flex h-[27px] shrink-0 items-center gap-[6px] rounded-[2px] border border-[#605e5c] bg-white pl-[8px]">
        <Magnifier size={14} color="#605e5c" />
        <span className="sr-only">Search fields</span>
        <input type="text" placeholder="Search" className="h-5 w-full bg-transparent pt-px text-[13px] leading-5 text-[#484644] outline-none placeholder:text-[#484644]" />
      </label>
      <div className="mt-2 flex min-h-0 flex-1">
        <div className="min-h-0 flex-1 overflow-hidden text-[12px] font-[330] text-[#201f1e]">
          <ul className="-mt-[14px]">
            {fields.map((f, i) => (
              <li key={f.t} className="flex h-6 items-center pl-[23px]">
                <span className="w-[15px]">{f.open && <RowChevron />}</span>
                <input id={"f" + i} type="checkbox" className="m-0 size-3 appearance-none rounded-[2px] border border-[#797775]" />
                <span className="ml-[6px] w-5">
                  {f.icon && (
                    <svg width="16" height="16" viewBox="0 0 16 16" fill="none" stroke="#323130">{fieldIcons[f.icon]}</svg>
                  )}
                </span>
                <label htmlFor={"f" + i} className="whitespace-nowrap">{f.t}</label>
              </li>
            ))}
            {["Measures (2)", "People"].map((t) => (
              <li key={t} className="flex h-6 items-center pl-[8px]">
                <RowChevron />
                <svg width="13" height="12" viewBox="0 0 13 12" fill="none" stroke="#252423" className="ml-[6px] mr-[6px]">
                  <path d="M.5 .5H12.5V11.5H.5ZM0 2H13M.5 5.5H12.5M.5 8.5H12.5M4.5 2V11.5M8.5 2V11.5" />
                </svg>
                {t}
              </li>
            ))}
          </ul>
        </div>
        <div className="mr-[4px] flex w-2 flex-col pb-[26px] pt-[98px]">
          <div className="flex-1 bg-[#c8c8c8]" />
        </div>
      </div>
    </aside>
  );
}

/* ---------- bottom bars ---------- */

function StatusBar() {
  return (
    <footer className="flex h-6 shrink-0 items-center justify-between border-t border-[#e1dfdd] bg-[#f3f2f1] pl-[5px] pr-[15px] text-[12px] text-[#323130]">
      <span>Page 2 of 2</span>
      <div className="flex items-center">
        <button type="button" aria-label="Zoom out" className="mr-[5px] font-bold">-</button>
        <div className="relative flex w-[100px] items-center">
          <span className="absolute left-1/2 h-[6px] w-px bg-[#605e5c]" />
          <input
            type="range"
            aria-label="Zoom"
            min={10}
            max={195}
            defaultValue={71}
            className="h-[11px] w-full appearance-none bg-[linear-gradient(#605e5c,#605e5c)] bg-[length:100%_1px] bg-center bg-no-repeat [&::-webkit-slider-thumb]:h-[11px] [&::-webkit-slider-thumb]:w-[4px] [&::-webkit-slider-thumb]:appearance-none [&::-webkit-slider-thumb]:bg-[#605e5c]"
          />
        </div>
        <button type="button" aria-label="Zoom in" className="ml-[6px]">
          <svg width="8" height="8" viewBox="0 0 8 8" stroke="#605e5c"><path d="M4 0V8M0 4H8" /></svg>
        </button>
        <span className="ml-[16px] w-[47px] text-[#605e5c]">71%</span>
        <button type="button" aria-label="Fit to page">
          <svg width="16" height="12" viewBox="0 0 16 12" fill="none" stroke="#605e5c">
            <path d="M.5 .5H15.5V11.5H.5Z" />
            <path d="M2.5 4.5V2.5H4.5M11.5 2.5H13.5V4.5M13.5 7.5V9.5H11.5M4.5 9.5H2.5V7.5" />
          </svg>
        </button>
      </div>
    </footer>
  );
}

function TaskButton({ name, open, active, children }: { name: string; open?: boolean; active?: boolean; children: ReactNode }) {
  return (
    <button type="button" aria-label={name} className={"flex h-full w-[49px] flex-col items-center " + (active ? "bg-[#4b4a4f]" : "")}>
      <span className="flex flex-1 items-center">{children}</span>
      <span className={"h-[3px] " + (active ? "w-full " : "w-10 ") + (open ? "bg-[#76b9ed]" : "")} />
    </button>
  );
}

function Taskbar() {
  return (
    <footer className="flex h-[41px] shrink-0 items-center justify-between bg-[linear-gradient(to_right,#202024_0%,#222125_64%,#262327_68%,#3a2c34_76%,#3c2e37_88%,#30262d_100%)] text-white">
      <div className="flex h-full pl-px">
        <TaskButton name="Start">
          <svg width="16" height="16" viewBox="0 0 16 16" fill="#fff" className="mr-[3px] mt-[3px]"><path d="M0 2.3L6.5 1.3V7.5H0ZM7.3 1.2L16 0V7.5H7.3ZM0 8.4H6.5V14.7L0 13.8ZM7.3 8.4H16V16L7.3 14.8Z" /></svg>
        </TaskButton>
        <TaskButton name="File Explorer" open>
          <svg width="22" height="20" viewBox="0 0 22 20">
            <path d="M0 2Q0 1 1 1H8L10 3H21V18H0Z" fill="#e8a317" />
            <path d="M0 5H22V18H0Z" fill="#fcd462" />
            <path d="M4 19V11Q4 10 5 10H17Q18 10 18 11V19H14V14H8V19Z" fill="#3b97dd" />
            <path d="M8 14H14V18H8Z" fill="#fcd462" />
          </svg>
        </TaskButton>
        <TaskButton name="Jupyter">
          <svg width="18" height="23" viewBox="0 0 18 23">
            <path d="M1 8Q9 -2 17 8Q9 3 1 8ZM1 15Q9 25 17 15Q9 20 1 15Z" fill="#f37726" />
            <circle cx="15" cy="2" r="1.3" fill="#767677" /><circle cx="3" cy="21" r="1.6" fill="#9e9e9e" /><circle cx="2" cy="4" r=".8" fill="#616262" />
          </svg>
        </TaskButton>
        <TaskButton name="Chrome" open>
          <svg width="23" height="23" viewBox="0 0 24 24">
            <circle cx="12" cy="12" r="12" fill="#2ba24c" />
            <path d="M12 6.5H22.7A12 12 0 0 1 12 24L16.8 14.7Z" fill="#fbc116" />
            <path d="M1.6 6L7.2 14.7L12 12V6.5H22.7A12 12 0 0 0 1.6 6Z" fill="#ea4335" />
            <circle cx="12" cy="12" r="5.6" fill="#fff" /><circle cx="12" cy="12" r="4.4" fill="#4285f4" />
          </svg>
        </TaskButton>
        <TaskButton name="Power BI Desktop" open active>
          <svg width="20" height="24" viewBox="0 0 20 24">
            <defs>
              <linearGradient id="pb1" x2="1" y2="1"><stop stopColor="#e6ad10" /><stop offset="1" stopColor="#c87e0e" /></linearGradient>
              <linearGradient id="pb2" x2="1" y2="1"><stop stopColor="#f6d751" /><stop offset="1" stopColor="#e6ad10" /></linearGradient>
              <linearGradient id="pb3" x2="1" y2="1"><stop stopColor="#f9e589" /><stop offset="1" stopColor="#f6d751" /></linearGradient>
            </defs>
            <rect x="10" width="9" height="24" fill="url(#pb1)" /><rect x="5" y="6" width="9" height="18" fill="url(#pb2)" /><rect y="12" width="8" height="12" fill="url(#pb3)" />
          </svg>
        </TaskButton>
      </div>
      <div className="flex h-full items-center pr-[4px] text-[12px]">
        <svg width="13" height="8" viewBox="0 0 13 8" fill="none" stroke="#fff" className="mr-[13px]"><path d="M.5 7L6.5 1L12.5 7" /></svg>
        <svg width="13" height="13" viewBox="0 0 13 13" fill="none" stroke="#fff" className="mr-[8px] mt-[2px]">
          <path d="M.5 12A12 12 0 0 1 12.5 .5M3.5 12A9 9 0 0 1 12.5 3.5M6.5 12A6 6 0 0 1 12.5 6.5" /><circle cx="11" cy="11" r="1.5" fill="#fff" stroke="none" />
        </svg>
        <svg width="17" height="14" viewBox="0 0 17 14" fill="none" stroke="#fff" className="mr-[9px]">
          <path d="M.5 4.5H3L6.5 1.5V12.5L3 9.5H.5ZM8.5 5Q9.5 7 8.5 9M10.5 3Q13 7 10.5 11M12.5 1Q17.5 7 12.5 13" />
        </svg>
        <span className="mr-[11px]">ENG</span>
        <time className="mr-[16px] text-center leading-[18px]">23:05<br />05-07-2022</time>
        <button type="button" aria-label="Notifications" className="relative mr-[10px] h-6 w-[26px]">
          <svg width="26" height="26" viewBox="0 0 26 26">
            <path d="M0 1H16V14H8L5 17V14H0Z" fill="#fff" />
            <path d="M3 4.5H13M3 7.5H13M3 10.5H13" stroke="#3a2c34" />
            <circle cx="16" cy="16" r="9" fill="#3a3036" stroke="#8a8886" />
            <text x="16" y="20" fontSize="11" fontWeight="600" textAnchor="middle" fill="#fff" className="font-['Open_Sans',sans-serif]">10</text>
          </svg>
        </button>
        <span className="h-full w-px bg-[#6b6067]" />
      </div>
    </footer>
  );
}

export default function App() {
  return (
    <div className="flex h-screen flex-col overflow-hidden font-['Open_Sans','Noto_Sans',sans-serif] font-[350]">
      <TitleBar />
      <Menu />
      <Ribbon />
      <div className="flex min-h-0 flex-1">
        <Rail />
        <div className="flex min-w-0 flex-1 flex-col">
          <Report />
          <PageTabs />
        </div>
        <Filters />
        <Visualizations />
        <Fields />
      </div>
      <StatusBar />
      <Taskbar />
    </div>
  );
}
